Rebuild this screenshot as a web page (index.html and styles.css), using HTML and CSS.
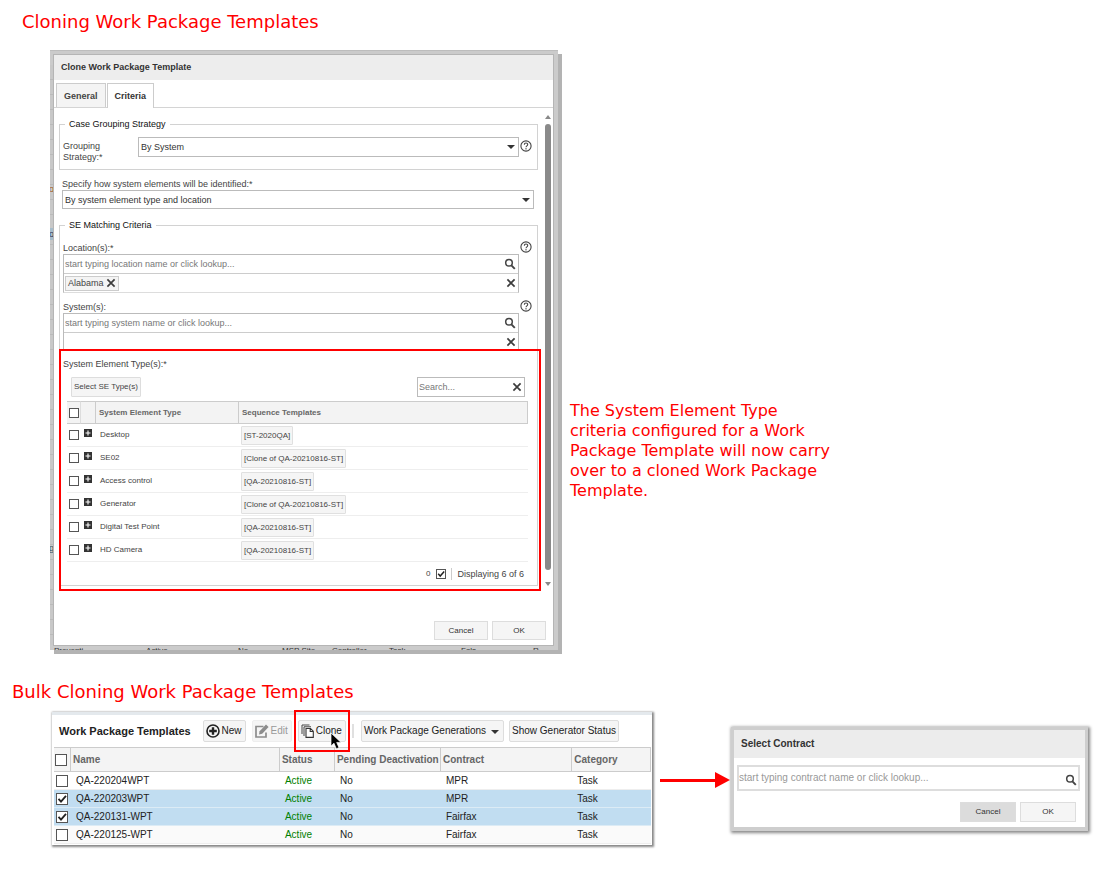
FILE: index.html
```html
<!DOCTYPE html>
<html lang="en">
<head>
<meta charset="utf-8">
<title>Cloning Work Package Templates</title>
<meta name="viewport" content="width=device-width, initial-scale=1">
<link rel="stylesheet" href="styles.css">
</head>
<body>
<svg class="defs" aria-hidden="true">
  <symbol id="help" viewBox="0 0 12 12"><circle cx="6" cy="6" r="5.1" fill="none" stroke="#444" stroke-width="1.1"/><path d="M4.3 4.8C4.3 2.4 7.8 2.5 7.7 4.6C7.6 5.9 6 5.8 6 7.3" fill="none" stroke="#444" stroke-width="1.1"/><rect x="5.4" y="8.2" width="1.2" height="1.2" fill="#444"/></symbol>
  <symbol id="lens" viewBox="0 0 12 12"><circle cx="5" cy="4.8" r="3.3" fill="none" stroke="#444" stroke-width="1.5"/><path d="M7.4 7.3L10.8 10.8" stroke="#444" stroke-width="1.9"/></symbol>
  <symbol id="cross" viewBox="0 0 10 10"><path d="M1.4 1.4L8.6 8.6M8.6 1.4L1.4 8.6" stroke="#3c3c3c" stroke-width="1.7"/></symbol>
  <symbol id="plus" viewBox="0 0 8 8"><rect width="8" height="8" fill="#333"/><path d="M4 1.5V6.5M1.5 4H6.5" stroke="#fff" stroke-width="1.1"/></symbol>
</svg>

<h1 class="heading heading-first">Cloning Work Package Templates</h1>
<section class="stage-one">
  <div class="backdrop">
    <div class="edge" aria-hidden="true"><span class="edge-mark">o</span><span class="edge-mark edge-blue">o</span><span class="edge-mark edge-low">g</span></div>
    <div class="peek" aria-hidden="true"><span>Preventi</span><span>Active</span><span>No</span><span>MSP Site</span><span>Controller</span><span>Task</span><span>Fals</span><span>R</span></div>
    <div class="dialog">
      <h2 class="dialog-title">Clone Work Package Template</h2>
      <div class="tabs">
        <button class="tab" type="button">General</button>
        <button class="tab tab-active" type="button">Criteria</button>
      </div>
      <div class="dialog-body">
        <form class="criteria">
          <fieldset class="group">
            <legend>Case Grouping Strategy</legend>
            <div class="grouping">
              <label class="grouping-label" for="strategy">Grouping Strategy:*</label>
              <span class="pick"><select id="strategy"><option>By System</option></select></span>
              <svg class="help"><use href="#help"/></svg>
            </div>
          </fieldset>
          <div class="identify">
            <label for="identify">Specify how system elements will be identified:*</label>
            <span class="pick"><select id="identify"><option>By system element type and location</option></select></span>
          </div>
          <fieldset class="group group-match">
            <legend>SE Matching Criteria</legend>
            <div class="lookup">
              <div class="lookup-head"><label for="location">Location(s):*</label><svg class="help"><use href="#help"/></svg></div>
              <div class="lookup-box">
                <div class="lookup-row"><input id="location" type="text" placeholder="start typing location name or click lookup..."><svg class="lens"><use href="#lens"/></svg></div>
                <div class="lookup-row"><span class="tag">Alabama <svg class="cross"><use href="#cross"/></svg></span><svg class="cross cross-end"><use href="#cross"/></svg></div>
              </div>
            </div>
            <div class="lookup">
              <div class="lookup-head"><label for="system">System(s):</label><svg class="help"><use href="#help"/></svg></div>
              <div class="lookup-box">
                <div class="lookup-row"><input id="system" type="text" placeholder="start typing system name or click lookup..."><svg class="lens"><use href="#lens"/></svg></div>
                <div class="lookup-row lookup-empty"><svg class="cross cross-end"><use href="#cross"/></svg></div>
              </div>
            </div>
            <div class="types">
              <h3 class="types-title">System Element Type(s):*</h3>
              <div class="types-bar">
                <button class="small-button" type="button">Select SE Type(s)</button>
                <div class="search"><input type="text" aria-label="Search" placeholder="Search..."><svg class="cross"><use href="#cross"/></svg></div>
              </div>
              <table class="types-table">
                <colgroup><col class="t-check"><col class="t-plus"><col class="t-name"><col></colgroup>
                <thead><tr><th><input type="checkbox" aria-label="Select all types"></th><th></th><th>System Element Type</th><th>Sequence Templates</th></tr></thead>
                <tbody>
                  <tr><td><input type="checkbox" aria-label="Desktop"></td><td><svg class="plus"><use href="#plus"/></svg></td><td>Desktop</td><td><span class="chip">[ST-2020QA]</span></td></tr>
                  <tr><td><input type="checkbox" aria-label="SE02"></td><td><svg class="plus"><use href="#plus"/></svg></td><td>SE02</td><td><span class="chip">[Clone of QA-20210816-ST]</span></td></tr>
                  <tr><td><input type="checkbox" aria-label="Access control"></td><td><svg class="plus"><use href="#plus"/></svg></td><td>Access control</td><td><span class="chip">[QA-20210816-ST]</span></td></tr>
                  <tr><td><input type="checkbox" aria-label="Generator"></td><td><svg class="plus"><use href="#plus"/></svg></td><td>Generator</td><td><span class="chip">[Clone of QA-20210816-ST]</span></td></tr>
                  <tr><td><input type="checkbox" aria-label="Digital Test Point"></td><td><svg class="plus"><use href="#plus"/></svg></td><td>Digital Test Point</td><td><span class="chip">[QA-20210816-ST]</span></td></tr>
                  <tr><td><input type="checkbox" aria-label="HD Camera"></td><td><svg class="plus"><use href="#plus"/></svg></td><td>HD Camera</td><td><span class="chip">[QA-20210816-ST]</span></td></tr>
                </tbody>
              </table>
              <div class="types-foot"><label class="count">0 <input type="checkbox" checked></label><span class="shown">Displaying 6 of 6</span></div>
            </div>
          </fieldset>
        </form>
        <div class="scroll" aria-hidden="true"><i class="scroll-up"></i><i class="scroll-thumb"></i><i class="scroll-down"></i></div>
      </div>
      <div class="dialog-foot"><button class="action" type="button">Cancel</button><button class="action" type="button">OK</button></div>
    </div>
  </div>
  <p class="note">The System Element Type criteria configured for a Work Package Template will now carry over to a cloned Work Package Template.</p>
</section>

<h1 class="heading heading-second">Bulk Cloning Work Package Templates</h1>
<section class="stage-two">
  <div class="panel">
    <div class="toolbar">
      <h2 class="toolbar-title">Work Package Templates</h2>
      <button class="tool tool-new" type="button"><svg width="14" height="14" viewBox="0 0 14 14"><circle cx="7" cy="7" r="6" fill="none" stroke="#222" stroke-width="1.6"/><path d="M7 3.2V10.8M3.2 7H10.8" stroke="#222" stroke-width="2.4"/></svg>New</button>
      <button class="tool tool-edit" type="button" disabled><svg width="14" height="14" viewBox="0 0 14 14"><path d="M8.5 2.5H1V13H11V8.5" fill="none" stroke="#8c8c8c" stroke-width="1.7"/><path d="M4 10.5L4.6 7.2L11 .6L13.6 3L7.2 9.7Z" fill="#8c8c8c"/></svg>Edit</button>
      <div class="clone-mark">
        <button class="tool tool-clone" type="button"><svg width="13" height="14" viewBox="0 0 13 14"><path d="M8.5 1H1V10M10 2.8H3V12" fill="none" stroke="#444" stroke-width="1"/><path d="M5 4.5H9.5L12.3 7.2V13.4H5ZM9.2 4.7V7.5H12.2" fill="#fff" stroke="#333" stroke-width="1.1"/></svg>Clone</button>
        <svg class="cursor" width="12" height="18" viewBox="0 0 12 18"><path d="M1 1V14L4 11.2L6.3 16.8L9 15.7L6.7 10.4H11Z" fill="#000" stroke="#fff" stroke-width=".7"/></svg>
      </div>
      <span class="divider"></span>
      <button class="tool tool-menu" type="button">Work Package Generations<i class="caret"></i></button>
      <button class="tool" type="button">Show Generator Status</button>
    </div>
    <table class="wpt">
      <colgroup><col class="w-check"><col class="w-name"><col class="w-status"><col class="w-pending"><col class="w-contract"><col class="w-category"></colgroup>
      <thead><tr><th><input type="checkbox" aria-label="Select all templates"></th><th>Name</th><th>Status</th><th>Pending Deactivation</th><th>Contract</th><th>Category</th></tr></thead>
      <tbody>
        <tr><td><input type="checkbox" aria-label="QA-220204WPT"></td><td>QA-220204WPT</td><td class="active">Active</td><td>No</td><td>MPR</td><td>Task</td></tr>
        <tr class="picked"><td><input type="checkbox" checked aria-label="QA-220203WPT"></td><td>QA-220203WPT</td><td class="active">Active</td><td>No</td><td>MPR</td><td>Task</td></tr>
        <tr class="picked"><td><input type="checkbox" checked aria-label="QA-220131-WPT"></td><td>QA-220131-WPT</td><td class="active">Active</td><td>No</td><td>Fairfax</td><td>Task</td></tr>
        <tr class="last"><td><input type="checkbox" aria-label="QA-220125-WPT"></td><td>QA-220125-WPT</td><td class="active">Active</td><td>No</td><td>Fairfax</td><td>Task</td></tr>
      </tbody>
    </table>
  </div>
  <div class="arrow" aria-hidden="true"><i class="arrow-line"></i><i class="arrow-head"></i></div>
  <div class="contract">
    <h2 class="contract-title">Select Contract</h2>
    <div class="contract-body">
      <div class="contract-field"><input type="text" aria-label="Contract" placeholder="start typing contract name or click lookup..."><svg class="lens"><use href="#lens"/></svg></div>
      <div class="contract-foot"><button class="action action-dark" type="button">Cancel</button><button class="action" type="button">OK</button></div>
    </div>
  </div>
</section>
</body>
</html>
```
FILE: styles.css
```css
* { box-sizing: border-box; }
body { margin: 0; min-height: 100vh; padding-bottom: 16px; background: #fff; color: #444; font: 9px/12px "Liberation Sans", Arial, sans-serif; }
h1, h2, h3, p { margin: 0; }
button, input, select { font: inherit; color: inherit; margin: 0; }
button { padding: 0; cursor: pointer; }
svg { display: block; flex: none; }
.defs { position: absolute; width: 0; height: 0; }

.heading { color: #f00; font: 18px/24px "DejaVu Sans", Verdana, sans-serif; }
.heading-first { padding: 10px 22px 16px; }
.heading-second { padding: 30px 12px 8px; }

/* Clone dialog */
.stage-one { display: grid; grid-template-columns: 508fr 552fr; align-items: start; margin-left: 50px; }
.backdrop { position: relative; background: #cbcbcb; padding: 3px 4px 4px 3px; border-top: 1px solid #bdbdbd; box-shadow: 4px 4px 0 #b3b3b3; }
.edge { position: absolute; left: 0; top: 14px; bottom: 5px; width: 3px; overflow: hidden; background: repeating-linear-gradient(#c8c8c8 0 14px, #bababa 14px 15px); }
.edge-mark { position: absolute; top: 118px; left: -1px; color: #a05a20; }
.edge-blue { top: 163px; color: #335; background: #a5bccb; }
.edge-low { top: 477px; color: #356; }
.peek { position: absolute; left: 0; right: 0; bottom: 0; height: 4px; padding-left: 4px; overflow: hidden; display: grid; grid-template-columns: 92fr 92fr 44fr 50fr 57fr 72fr 72fr 25fr; font-size: 8px; line-height: 10px; color: #333; }
.dialog { position: relative; background: #fff; border: 1px solid #b5b5b5; }
.dialog-title { height: 25px; padding: 0 7px; background: #ededed; font-size: 9px; line-height: 25px; color: #333; }
.tabs { display: flex; gap: 1px; padding: 3px 2px 0; height: 28px; border-bottom: 1px solid #d4d4d4; }
.tab { height: 24px; padding: 0 7px; border: 1px solid #ccc; border-bottom: 0; background: #f4f4f4; font-weight: bold; color: #444; }
.tab-active { height: 25px; background: #fff; color: #333; }
.dialog-body { display: flex; }
.criteria { flex: 1; min-width: 0; padding: 10px 5px 4px 5px; }
.group { margin: 0; min-width: 0; padding: 0 3px; border: 1px solid #d2d2d2; }
.group legend { margin-left: 2px; padding: 0 4px; height: 12px; color: #111; }
.grouping { display: flex; align-items: flex-start; padding: 7px 2px 12px 0; }
.grouping-label { width: 75px; padding: 4px 24px 0 0; height: 20px; line-height: 11px; }
.grouping .help { margin: 3px 0 0 1px; }
.pick { position: relative; flex: 1; display: block; }
.pick::after, .caret { content: ""; border: 4px solid transparent; border-top-color: #333; border-bottom: 0; }
.pick::after { position: absolute; right: 4px; top: 8px; }
.pick select { display: block; appearance: none; width: 100%; height: 20px; padding: 0 2px; border: 1px solid #bbb; border-radius: 0; background: #fff; color: #333; }
.help { width: 12px; height: 12px; }
.identify { padding: 8px 4px 10px 3px; }
.identify label { display: block; }
.identify .pick select { height: 19px; }
.lookup { padding-right: 2px; }
.lookup-head { display: flex; justify-content: space-between; align-items: flex-end; height: 20px; }
.lookup-head .help { margin-bottom: 1px; }
.group-match .lookup:first-of-type .lookup-head { height: 23px; }
.lookup-box { margin-right: 13px; border: 1px solid #bbb; border-bottom-color: #ddd; }
.lookup-row { display: flex; align-items: center; height: 18px; }
.lookup-row:first-child { height: 19px; border-bottom: 1px solid #ccc; }
.lookup-row.lookup-empty { height: 17px; }
.lookup-row input { flex: 1; min-width: 0; height: 18px; padding: 0 1px; border: 0; background: none; }
input::placeholder { color: #777; opacity: 1; }
.lens { width: 12px; height: 12px; margin-right: 2px; }
.cross { width: 10px; height: 10px; }
.cross-end { margin: 0 2px 0 auto; }
.tag { display: flex; align-items: center; gap: 2px; height: 15px; margin-left: 1px; padding: 0 2px; border: 1px solid #ccc; background: #f4f4f4; }
.types { position: relative; padding: 7px 0 0; }
.types::after { content: ""; position: absolute; inset: -2px -7px -6px -4px; border: 2px solid #f00; pointer-events: none; }
.types-title { font-size: 9px; font-weight: normal; height: 19px; }
.types-bar { display: flex; justify-content: space-between; padding: 0 9px 4px 8px; }
.small-button { height: 20px; padding: 0 2px; border: 1px solid #ddd; border-radius: 1px; background: #f5f5f5; font-size: 8px; }
.search { display: flex; align-items: center; width: 108px; height: 20px; border: 1px solid #bbb; padding-right: 2px; }
.search input { flex: 1; min-width: 0; padding: 0 1px; border: 0; background: none; }
table { border-collapse: separate; border-spacing: 0; table-layout: fixed; width: 100%; }
th { text-align: left; }
td, th { padding: 0; white-space: nowrap; }
input[type="checkbox"] { appearance: none; display: block; width: 10px; height: 10px; border: 1px solid #555; background: #fff; }
input[type="checkbox"]:checked { background: #fff url("data:image/svg+xml,%3Csvg xmlns='http://www.w3.org/2000/svg' viewBox='0 0 10 10'%3E%3Cpath d='M1.5 4.8L4 7.6L9 1.8' fill='none' stroke='%23222' stroke-width='1.8'/%3E%3C/svg%3E") center / 100%; }
.types-table { width: auto; min-width: calc(100% - 10px); margin: 0 6px 0 4px; font-size: 8px; }
.t-check { width: 14px; }
.t-plus { width: 15px; }
.t-name { width: 143px; }
.types-table th { height: 23px; padding-left: 3px; border: solid #ccc; border-width: 1px 1px 1px 0; background: #f3f3f3; color: #666; }
.types-table th:first-child, .types-table td:first-child { padding-left: 2px; }
.types-table th:first-child { border-right-color: #ddd; }
.types-table td { height: 23px; border-bottom: 1px solid #eee; }
.types-table td:nth-child(3) { padding-left: 4px; }
.types-table td:nth-child(4) { padding-left: 2px; }
.plus { width: 8px; height: 8px; margin: 0 0 5px 3px; }
.chip { display: inline-block; height: 19px; padding: 0 2px; border: 1px solid #e0e0e0; border-radius: 1px; background: #f5f5f5; line-height: 17px; vertical-align: middle; }
.types-foot { display: flex; justify-content: flex-end; align-items: center; height: 23px; padding-right: 10px; }
.count { display: flex; align-items: center; gap: 6px; padding-right: 5px; border-right: 1px solid #ccc; font-size: 8px; }
.shown { padding-left: 5px; }
.scroll { width: 10px; display: flex; flex-direction: column; align-items: center; padding: 7px 0 4px; }
.scroll-up, .scroll-down { border: 3px solid transparent; }
.scroll-up { border-top: 0; border-bottom: 4px solid #888; }
.scroll-down { border-bottom: 0; border-top: 4px solid #888; }
.scroll-thumb { flex: 1; width: 6px; margin: 5px 0 12px; border-radius: 3px; background: #8a8a8a; }
.dialog-foot, .contract-foot { display: flex; justify-content: flex-end; gap: 4px; }
.dialog-foot { padding: 31px 7px 5px; }
.action { width: 54px; height: 19px; border: 1px solid #ddd; background: #f5f5f5; font-size: 8px; color: #333; }
.action-dark { background: #dcdcdc; }
.note { max-width: 278px; margin: 351px 0 0; padding-left: 12px; color: #f00; font: 16px/20px "DejaVu Sans", Verdana, sans-serif; }

/* Bulk cloning */
.stage-two { display: grid; grid-template-columns: 600fr 79fr 357fr; align-items: start; margin: 0 22px 0 52px; color: #222; font-size: 10px; }
.panel { min-width: 0; border-top: 3px solid #e4e9ed; padding: 0 1px 1px 2px; background: #fff; box-shadow: 1px 1px 2px 1px #888; }
.toolbar { display: flex; align-items: center; height: 32px; padding-left: 5px; }
.toolbar-title { margin-right: auto; font-size: 11px; white-space: nowrap; }
.tool { display: flex; align-items: center; gap: 2px; height: 22px; padding: 0 2px; border: 1px solid #ddd; border-radius: 2px; background: #f5f5f5; font-size: 10px; white-space: nowrap; color: #222; }
.toolbar > .tool:last-child { margin: 0 32px 0 5px; }
.tool-new { padding-right: 3px; }
.tool-edit { margin-left: 6px; padding-right: 3px; border-color: #eee; color: #999; }
.clone-mark { position: relative; margin: 0 6px; }
.clone-mark::after { content: ""; position: absolute; inset: -10px -4px; border: 2px solid #f00; pointer-events: none; }
.tool-clone { padding-right: 3px; }
.cursor { position: absolute; right: 4px; bottom: -8px; }
.divider { width: 2px; height: 14px; margin-right: 7px; background: #e0e0e0; }
.caret { margin: 1px 2px 0 3px; }
.w-check { width: 17px; }
.w-name { width: 35%; }
.w-status { width: 55px; }
.w-pending { width: 106px; }
.w-contract { width: 22%; }
.wpt th { height: 25px; padding-left: 2px; border: solid #ccc; border-width: 1px 1px 1px 0; background: #f4f4f4; color: #666; }
.wpt th:first-child { padding-left: 1px; }
.wpt td { height: 18px; padding-left: 5px; border-bottom: 1px solid #eee; }
.wpt td:first-child { padding-left: 2px; }
.wpt input[type="checkbox"] { width: 12px; height: 12px; }
.picked td { background: #c1ddf1; border-bottom-color: #dcebf5; }
.last td { background: #fafafa; }
.wpt .active { color: #008000; }
.arrow { display: flex; align-items: center; padding: 60px 1px 0 8px; }
.arrow-line { flex: 1; height: 3px; background: #f00; }
.arrow-head { border: 8px solid transparent; border-left: 15px solid #f00; border-right: 0; }
.contract { min-width: 0; margin-top: 15px; border: 3px solid #cecece; border-bottom-width: 4px; background: #fff; box-shadow: 1px 1px 3px 1px #888; }
.contract-title { padding: 0 7px; background: #ececec; color: #333; font-size: 10px; line-height: 28px; }
.contract-body { padding: 7px 5px 5px 3px; }
.contract-field { display: flex; align-items: center; height: 26px; border: 2px solid #ddd; }
.contract-field input { flex: 1; min-width: 0; padding: 0; border: 0; background: none; }
.contract-field input::placeholder { color: #999; }
.contract-field .lens { margin: 4px 1px 0 0; }
.contract-foot { padding: 11px 4px 0; }
.contract-foot .action { width: 56px; height: 20px; }
```
